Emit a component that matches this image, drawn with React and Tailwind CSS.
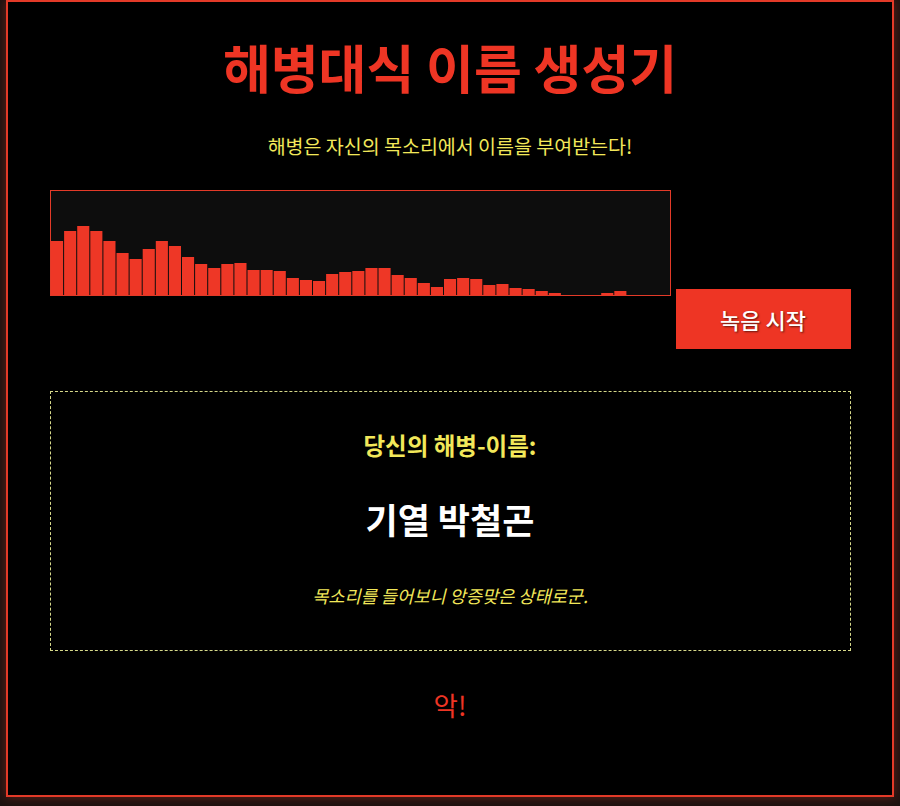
import React from "react";

const BARS = [
    54, 64, 69, 64, 54, 42, 36, 46, 54, 49, 38, 31, 27, 31, 32, 25, 25, 24, 17, 15, 14, 21,
    23, 24, 27, 27, 20, 17, 12, 8, 16, 17, 16, 10, 11, 7, 6, 4, 2, 0, 0, 0, 2, 4, 0, 0, 0, 0,
];

function Waveform() {
    const w = 620;
    const h = 104;
    const pitch = 13.1;
    return (
        <div className="w-[621px] h-[106px] border border-[#e33a28] bg-[#0d0d0d] shrink-0">
            <svg width={w} height={h} viewBox={`0 0 ${w} ${h}`} className="block">
                {BARS.map((v, i) =>
                    v > 0 ? (
                        <rect
                            key={i}
                            x={i * pitch}
                            y={h - v}
                            width={pitch - 1}
                            height={v}
                            fill="#ee3726"
                        />
                    ) : null
                )}
            </svg>
        </div>
    );
}

export default function App() {
    return (
        <div
            className="min-h-[806px] bg-[#1c1210] text-white"
            style={{ fontFamily: '"Noto Sans CJK KR", "Noto Sans", sans-serif' }}
        >
            <div className="ml-[6px] w-[888px] h-[797px] border-2 border-[#e33a28] bg-black shadow-[0_0_10px_rgba(226,58,40,0.35)]">
                <div className="w-[801px] mx-auto flex flex-col items-center">
                    <h1 className="mt-[33px] text-[52px] leading-[64px] font-bold text-[#ee3524]">
                        해병대식 이름 생성기
                    </h1>
                    <p className="mt-[33px] text-[19.5px] leading-[28px] text-[#f2e85a]">
                        해병은 자신의 목소리에서 이름을 부여받는다!
                    </p>

                    <div className="mt-[30px] w-full flex items-start gap-[5px]">
                        <Waveform />
                        <button className="mt-[99px] w-[175px] h-[60px] bg-[#ee3524] text-white text-[22px] font-medium [text-shadow:1px_1px_2px_rgba(0,0,0,0.6)]">
                            녹음 시작
                        </button>
                    </div>

                    <div className="mt-[42px] w-full h-[260px] border border-dashed border-[#d6d98a] flex flex-col items-center">
                        <div className="mt-[39px] text-[23.5px] leading-[28px] font-bold text-[#f2e85a]">
                            당신의 해병-이름:
                        </div>
                        <div className="mt-[38px] text-[35px] leading-[44px] font-bold text-white">
                            기열 박철곤
                        </div>
                        <div className="mt-[43px] text-[17.6px] leading-[24px] italic text-[#f2e85a]">
                            목소리를 들어보니 앙증맞은 상태로군.
                        </div>
                    </div>

                    <div className="mt-[38px] text-[26.5px] leading-[32px] text-[#ee3524]">악!</div>
                </div>
            </div>
        </div>
    );
}
